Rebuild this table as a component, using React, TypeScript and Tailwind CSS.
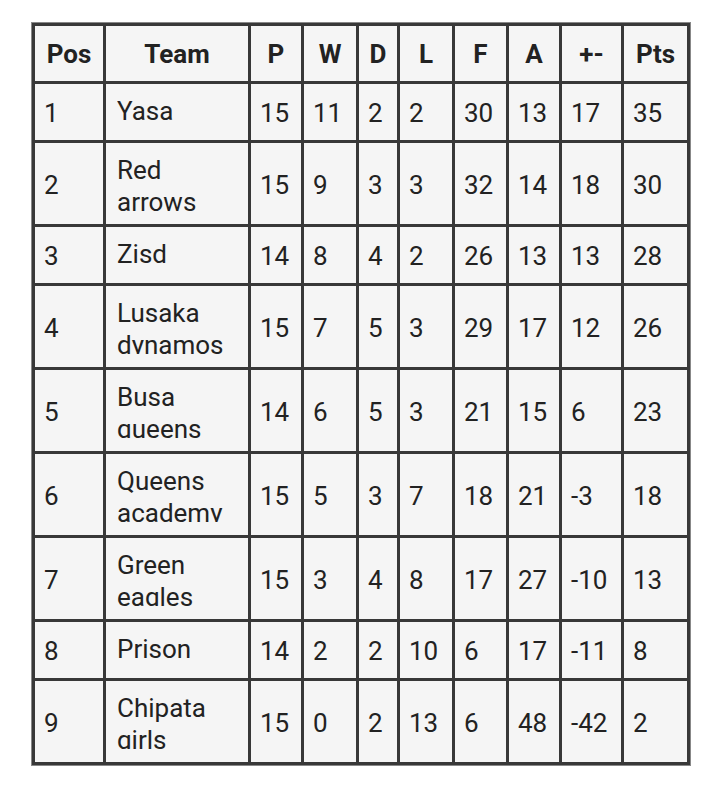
import React from 'react';

const headers = ['Pos', 'Team', 'P', 'W', 'D', 'L', 'F', 'A', '+-', 'Pts'];
const widths = [71, 145, 53, 55, 41, 55, 54, 53, 62, 66];

const rows: (string | number)[][] = [
  [1, 'Yasa', 15, 11, 2, 2, 30, 13, 17, 35],
  [2, 'Red arrows', 15, 9, 3, 3, 32, 14, 18, 30],
  [3, 'Zisd', 14, 8, 4, 2, 26, 13, 13, 28],
  [4, 'Lusaka dynamos', 15, 7, 5, 3, 29, 17, 12, 26],
  [5, 'Busa queens', 14, 6, 5, 3, 21, 15, 6, 23],
  [6, 'Queens academy', 15, 5, 3, 7, 18, 21, -3, 18],
  [7, 'Green eagles', 15, 3, 4, 8, 17, 27, -10, 13],
  [8, 'Prison', 14, 2, 2, 10, 6, 17, -11, 8],
  [9, 'Chipata girls', 15, 0, 2, 13, 6, 48, -42, 2],
];

const App = () => {
  return (
    <div className="min-h-[787px] w-[720px] bg-white pl-[31px] pt-[22px] font-['Roboto',sans-serif] text-[26px] leading-[32px] text-[#222]">
      <div className="inline-block border border-[#888]">
        <table className="w-[658px] table-fixed border-collapse bg-[#f5f5f5]">
          <colgroup>
            {widths.map((w, i) => (
              <col key={i} style={{ width: w }} />
            ))}
          </colgroup>
          <thead>
            <tr>
              {headers.map((h) => (
                <th
                  key={h}
                  className="border-[3px] border-[#383838] px-[6px] pt-[12px] pb-[11px] text-center align-middle font-bold"
                >
                  {h}
                </th>
              ))}
            </tr>
          </thead>
          <tbody>
            {rows.map((r) => (
              <tr key={r[0]}>
                {r.map((c, i) =>
                  i === 1 ? (
                    <td
                      key={i}
                      className="border-[3px] border-[#383838] pl-[11px] pr-[10px] pt-[11px] pb-[13px] text-left align-middle"
                    >
                      <div className="max-h-[57px] overflow-hidden">{c}</div>
                    </td>
                  ) : (
                    <td
                      key={i}
                      className="border-[3px] border-[#383838] pl-[9px] pr-[2px] pt-[12px] pb-[10px] text-left align-middle"
                    >
                      {c}
                    </td>
                  )
                )}
              </tr>
            ))}
          </tbody>
        </table>
      </div>
    </div>
  );
};

export default App;
